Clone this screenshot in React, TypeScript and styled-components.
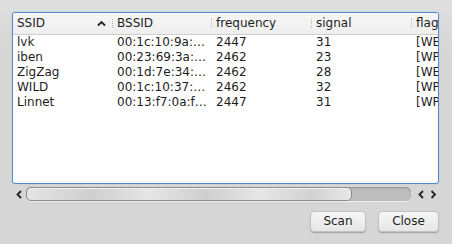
import React from "react";
import styled, { createGlobalStyle } from "styled-components";

const Global = createGlobalStyle`
  html, body { margin: 0; padding: 0; }
  body {
    width: 452px; height: 244px; overflow: hidden;
    background: linear-gradient(#dedede 0px, #d6d6d6 60px, #d6d6d6 100%);
    font-family: "DejaVu Sans", "Noto Sans", sans-serif;
    font-size: 12px; color: #1e1e1e;
  }
`;

const Window = styled.div`
  display: flex; flex-direction: column;
  padding: 12px 13px 0 12px;
  height: 244px; box-sizing: border-box;
`;

const ListBox = styled.div`
  height: 172px; box-sizing: border-box;
  border: 1px solid #4d8ad6;
  border-radius: 3px;
  background: #fff;
  overflow: hidden;
  box-shadow: 0 0 1px rgba(77,138,214,0.5);
`;

const cols = "99px 99px 100px 100px minmax(0, 1fr)";

const HeaderRow = styled.div`
  display: grid; grid-template-columns: ${cols};
  height: 22px; box-sizing: border-box;
  background: linear-gradient(#f6f6f6, #eeeeee);
  border-bottom: 1px solid #cfcfcf;
  white-space: nowrap;
`;

const HeaderCell = styled.div<{ $first?: boolean }>`
  display: flex; align-items: center; justify-content: space-between;
  padding-left: ${p => (p.$first ? 4 : 5)}px; padding-right: ${p => (p.$first ? 6 : 0)}px;
  position: relative; overflow: hidden;
  line-height: 21px;
  ${p => !p.$first && `
    &::before {
      content: ""; position: absolute; left: 0; top: 6px; height: 9px;
      border-left: 1px dotted #b4b4b4;
    }
  `}
`;

const Row = styled.div`
  display: grid; grid-template-columns: ${cols};
  height: 15px; line-height: 15px; white-space: nowrap;
`;

const Cell = styled.div<{ $first?: boolean }>`
  padding-left: ${p => (p.$first ? 4 : 5)}px;
  overflow: hidden;
`;

const ScrollRow = styled.div`
  display: flex; align-items: center;
  height: 14px; margin-top: 3px;
`;

const ArrowBox = styled.div`
  width: 14px; height: 14px; display: flex; align-items: center; justify-content: center;
`;

const Trough = styled.div`
  flex: 1; height: 14px; box-sizing: border-box;
  border-radius: 5px;
  background: #bdbdbd;
  box-shadow: inset 0 1px 2px rgba(0,0,0,0.25), 0 1px 0 #efefef;
  display: flex; align-items: stretch;
`;

const Thumb = styled.div`
  width: 326px; box-sizing: border-box;
  border-radius: 5px;
  border: 1px solid #8c8c8c;
  background: linear-gradient(90deg, #e4e4e4, #cfcfcf 20%, #e6e6e6 38%, #cfcfcf 55%, #e6e6e6 72%, #d2d2d2 88%, #e8e8e8);
  box-shadow: inset 0 1px 0 #f4f4f4;
`;

const EndArrows = styled.div`
  display: flex; margin-left: 4px; width: 24px; justify-content: space-between;
`;

const ButtonRow = styled.div`
  display: flex; justify-content: flex-end; gap: 12px;
  margin-top: 10px;
`;

const Button = styled.button<{ $w: number }>`
  width: ${p => p.$w}px; height: 21px;
  font-family: "DejaVu Sans", sans-serif; font-size: 12px; color: #1e1e1e;
  border: 1px solid #c2c2c2; border-radius: 4px;
  background: linear-gradient(#f6f6f6, #e6e6e6);
  box-shadow: 0 1px 1px rgba(0,0,0,0.25);
  padding: 0; line-height: 19px;
`;

const Chevron = ({ dir }: { dir: "left" | "right" | "up" }) => {
  const d =
    dir === "left" ? "M5 1 L1.5 4.5 L5 8" : dir === "right" ? "M1.5 1 L5 4.5 L1.5 8" : "M1 5.5 L4.5 2 L8 5.5";
  const w = dir === "up" ? 9 : 7;
  const h = dir === "up" ? 7 : 9;
  return (
    <svg width={w} height={h} viewBox={`0 0 ${w} ${h}`}>
      <path d={d} fill="none" stroke="#222" strokeWidth="1.8" />
    </svg>
  );
};

const data = [
  ["lvk", "00:1c:10:9a:…", "2447", "31", "[WEP][ESS]"],
  ["iben", "00:23:69:3a:…", "2462", "23", "[WPA2-PSK]"],
  ["ZigZag", "00:1d:7e:34:…", "2462", "28", "[WEP][ESS]"],
  ["WILD", "00:1c:10:37:…", "2462", "32", "[WPA-PSK]"],
  ["Linnet", "00:13:f7:0a:f…", "2447", "31", "[WPA-PSK]"],
];

export default function App() {
  return (
    <>
      <Global />
      <Window>
        <ListBox>
          <HeaderRow>
            <HeaderCell $first>
              <span>SSID</span>
              <Chevron dir="up" />
            </HeaderCell>
            <HeaderCell>BSSID</HeaderCell>
            <HeaderCell>frequency</HeaderCell>
            <HeaderCell>signal</HeaderCell>
            <HeaderCell>flags</HeaderCell>
          </HeaderRow>
          {data.map(r => (
            <Row key={r[0]}>
              {r.map((c, i) => (
                <Cell key={i} $first={i === 0}>{c}</Cell>
              ))}
            </Row>
          ))}
        </ListBox>
        <ScrollRow>
          <ArrowBox><Chevron dir="left" /></ArrowBox>
          <Trough><Thumb /></Trough>
          <EndArrows>
            <ArrowBox><Chevron dir="left" /></ArrowBox>
            <ArrowBox><Chevron dir="right" /></ArrowBox>
          </EndArrows>
        </ScrollRow>
        <ButtonRow>
          <Button $w={56}>Scan</Button>
          <Button $w={61}>Close</Button>
        </ButtonRow>
      </Window>
    </>
  );
}
